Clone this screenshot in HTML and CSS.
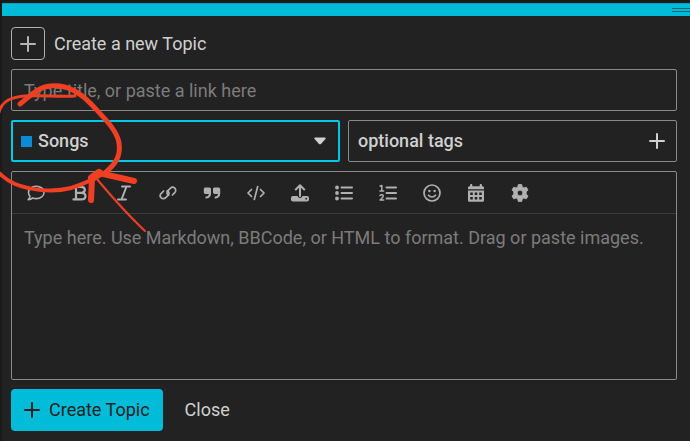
FILE: index.html
```html
<!DOCTYPE html>
<html lang="en">
<head>
  <meta charset="UTF-8" />
  <meta name="viewport" content="width=device-width, initial-scale=1.0"/>
  <title>Create a new Topic</title>
  <link rel="stylesheet" href="styles.css">
</head>
<body>
  <div class="page-strip"></div>
  <form class="composer">
    <div class="grippie"><span class="grip"></span></div>

    <div class="fields">
      <div class="action-title">
        <button type="button" class="action-btn" aria-label="Composer actions">
          <svg width="16" height="16" viewBox="0 0 16 16"><path d="M8 1v14M1 8h14" stroke="currentColor" stroke-width="2" stroke-linecap="round"/></svg>
        </button>
        <span>Create a new Topic</span>
      </div>

      <input type="text" class="title-input" aria-label="Title" placeholder="Type title, or paste a link here">

      <div class="selectors">
        <div class="category">
          <span class="swatch"></span>
          <select class="category-select" aria-label="Category">
            <option>Songs</option>
          </select>
          <svg class="caret" width="12" height="8" viewBox="0 0 12 8"><path d="M1.200.5h9.600c.9 0 1.200.8.6 1.400L7 6.900c-.6.6-1.400.6-2 0L.6 1.900C0 1.300.3.5 1.200.5z" fill="currentColor"/></svg>
        </div>
        <button type="button" class="tags">
          <span>optional tags</span>
          <svg width="16" height="16" viewBox="0 0 16 16"><path d="M8 1v14M1 8h14" stroke="currentColor" stroke-width="2" stroke-linecap="round"/></svg>
        </button>
      </div>

      <div class="editor">
        <div class="toolbar">
          <button type="button" aria-label="Quote post">
            <svg viewBox="0 0 18 18"><path d="M9.300 2.200c4.300 0 7.700 2.700 7.700 6.200s-3.400 6.200-7.700 6.200c-1.300 0-2.500-.2-3.500-.6-1.200.9-2.700 1.500-4.600 1.600 1-1 1.600-2.200 1.800-3.300C2 11.200 1.500 9.900 1.500 8.400c0-3.500 3.500-6.200 7.800-6.200z" fill="none" stroke="currentColor" stroke-width="1.600" stroke-linejoin="round"/></svg>
          </button>
          <button type="button" aria-label="Bold">
            <svg viewBox="0 0 18 18"><path d="M2.500 2.800h7.300c2.500 0 4 1.100 4 3 0 1.800-1.300 2.900-3.300 3 2.500.1 4 1.300 4 3.200 0 2.200-1.700 3.400-4.400 3.400H2.500M5 2.800v12.600M5 8.800h5.500" fill="none" stroke="currentColor" stroke-width="2.200" stroke-linecap="round"/></svg>
          </button>
          <button type="button" aria-label="Italic">
            <svg viewBox="0 0 18 18"><path d="M7 2.500h8M3 15.500h8M11.500 2.500l-5 13" fill="none" stroke="currentColor" stroke-width="2" stroke-linecap="round"/></svg>
          </button>
          <button type="button" aria-label="Link">
            <svg viewBox="0 0 18 18"><g fill="none" stroke="currentColor" stroke-width="1.700" stroke-linecap="round"><path d="M9.700 11.200C7.900 10.500 7.400 8.200 8.900 6.700l2.400-2.400c1.300-1.300 3.300-1.300 4.500-.1s1.200 3.200-.1 4.500l-2.300 2.300"/><path d="M8.300 6.800c1.800.7 2.300 3 .8 4.500l-2.400 2.400c-1.300 1.300-3.300 1.300-4.500.1s-1.200-3.200.1-4.500L4.600 7"/></g></svg>
          </button>
          <button type="button" aria-label="Blockquote">
            <svg viewBox="0 0 18 18"><g fill="currentColor"><path d="M2.500 3.500h3.700C7.300 3.500 8 4.200 8 5.300v4.200c0 3-1.700 4.900-4.600 4.900h-.9v-2h.9c1.500 0 2.300-.7 2.300-2.400H2.500C1.500 10 .8 9.300.8 8.300V5.200c0-1 .7-1.700 1.700-1.700z"/><path d="M11.700 3.500h3.700c1.100 0 1.800.7 1.800 1.800v4.200c0 3-1.700 4.900-4.600 4.900h-.9v-2h.9c1.500 0 2.300-.7 2.300-2.400h-3.200c-1 0-1.700-.7-1.700-1.700V5.200c0-1 .7-1.700 1.700-1.700z"/></g></svg>
          </button>
          <button type="button" aria-label="Preformatted text">
            <svg viewBox="0 0 18 18"><path d="M4.500 5.500L1 9l3.500 3.500M13.500 5.500L17 9l-3.500 3.500M10.700 2.500l-3.400 13" fill="none" stroke="currentColor" stroke-width="1.700" stroke-linecap="round" stroke-linejoin="round"/></svg>
          </button>
          <button type="button" aria-label="Upload">
            <svg viewBox="0 0 18 18"><path d="M9 12V1.500M4.800 5.500L9 1.300l4.200 4.200" fill="none" stroke="currentColor" stroke-width="2" stroke-linecap="round" stroke-linejoin="round"/><path d="M2 12h4.700c.2 1.200 1.100 2 2.300 2s2.100-.8 2.300-2H16c1.200 0 2 .8 2 2v1.500c0 1.200-.8 2-2 2H2c-1.200 0-2-.8-2-2V14c0-1.200.8-2 2-2zm13.200 1.800a.9.9 0 100 1.800.9.9 0 000-1.800z" fill="currentColor"/></svg>
          </button>
          <button type="button" aria-label="Bulleted list">
            <svg viewBox="0 0 18 18"><g fill="currentColor"><circle cx="2" cy="3.500" r="1.900"/><circle cx="2" cy="9" r="1.900"/><circle cx="2" cy="14.500" r="1.900"/></g><path d="M6.500 3.500H17M6.500 9H17M6.500 14.500H17" stroke="currentColor" stroke-width="2" stroke-linecap="round"/></svg>
          </button>
          <button type="button" aria-label="Numbered list">
            <svg viewBox="0 0 18 18"><path d="M7.500 3.500H17M7.500 9H17M7.500 14.500H17" stroke="currentColor" stroke-width="2" stroke-linecap="round"/><path d="M1.200 2l1.600-.6v5.400M1 7h3.700M1 11.500c.8-1.200 3.300-1 3.300.5 0 1.400-1.800 2.300-3.200 4h3.600" fill="none" stroke="currentColor" stroke-width="1.500" stroke-linecap="round" stroke-linejoin="round"/></svg>
          </button>
          <button type="button" aria-label="Emoji">
            <svg viewBox="0 0 18 18"><circle cx="9" cy="9" r="8" fill="none" stroke="currentColor" stroke-width="1.700"/><g fill="currentColor"><circle cx="6.400" cy="7" r="1.200"/><circle cx="11.600" cy="7" r="1.200"/></g><path d="M5.500 11.200c1.700 2.300 5.300 2.300 7 0" fill="none" stroke="currentColor" stroke-width="1.600" stroke-linecap="round"/></svg>
          </button>
          <button type="button" aria-label="Date and time">
            <svg viewBox="0 0 18 18"><path d="M4.200 1v3M13.800 1v3" stroke="currentColor" stroke-width="2.200" stroke-linecap="round"/><path fill="currentColor" fill-rule="evenodd" d="M2.500 2.200h13c.9 0 1.500.6 1.500 1.500v1.600H1V3.700c0-.9.6-1.500 1.500-1.500zM1 6.500h16v9.700c0 1-.7 1.600-1.600 1.600H2.600c-.9 0-1.600-.6-1.600-1.600zM3.200 8.500v2.400h2.600V8.500zM7.700 8.500v2.400h2.600V8.500zM12.200 8.500v2.400h2.600V8.500zM3.200 13v2.400h2.600V13zM7.700 13v2.400h2.600V13zM12.200 13v2.400h2.600V13z"/></svg>
          </button>
          <button type="button" aria-label="Options">
            <svg viewBox="0 0 18 18"><path fill="currentColor" fill-rule="evenodd" d="M7.300.5h3.400l.6 2.500 1.600.9 2.400-.8L17 6l-1.800 1.900v2.200L17 12l-1.700 2.900-2.400-.8-1.600.9-.6 2.500H7.300L6.700 15l-1.600-.9-2.400.8L1 12l1.800-1.900V7.900L1 6l1.700-2.900 2.400.8L6.700 3zM9 6.200a2.800 2.800 0 100 5.600 2.800 2.800 0 000-5.600z" stroke="currentColor" stroke-width=".8" stroke-linejoin="round"/></svg>
          </button>
        </div>
        <textarea class="editor-input" aria-label="Post" placeholder="Type here. Use Markdown, BBCode, or HTML to format. Drag or paste images."></textarea>
      </div>

      <div class="submit-panel">
        <button type="submit" class="create">
          <svg width="16" height="16" viewBox="0 0 16 16"><path d="M8 1v14M1 8h14" stroke="currentColor" stroke-width="2" stroke-linecap="round"/></svg>
          <span>Create Topic</span>
        </button>
        <button type="button" class="close">Close</button>
      </div>
    </div>
  </form>

  <!-- hand-drawn circle and arrow -->
  <svg class="marker" width="160" height="240" viewBox="0 0 160 240" fill="none" stroke="#f13f24" stroke-linecap="round" stroke-linejoin="round" aria-hidden="true">
    <path d="M20 104C30 96 38 87 50 86C66 84 80 92 92 105C104 118 117 130 119 143C121 157 115 164 106 172" stroke-width="5"/>
    <path d="M106 172C96 178 84 184 71 188C52 193 30 190 15 184C8 181 3 177 -2 172" stroke-width="4"/>
    <path d="M75 96C58 97 42 95 25 96C11 97 2 101 -1 112" stroke-width="3"/>
    <path d="M91 200L92 178L99 173L134 181" stroke-width="6"/>
    <path d="M92 178L99 173" stroke-width="8"/>
    <path d="M96 178C112 197 128 215 145 231" stroke-width="2"/>
  </svg>
</body>
</html>
```
FILE: styles.css
```css
* {
  box-sizing: border-box;
}

body {
  margin: 0;
  min-height: 100vh;
  padding-left: 2px;
  background: #1a1a1a;
  color: #d0d0d0;
  font-family: Roboto, "Liberation Sans", sans-serif;
  font-size: 18px;
  line-height: 24px;
  display: flex;
  flex-direction: column;
  overflow: hidden;
}

button,
input,
select,
textarea {
  margin: 0;
  padding: 0;
  border: none;
  background: none;
  color: inherit;
  font: inherit;
}

button {
  display: flex;
  align-items: center;
  cursor: pointer;
}

svg {
  display: block;
  flex: none;
}

.page-strip {
  height: 3px;
}

.composer {
  flex: 1;
  display: flex;
  flex-direction: column;
  background: #222;
}

.grippie {
  height: 13px;
  display: flex;
  align-items: center;
  justify-content: flex-end;
  background: #00bcd8;
  border-top: 1px solid #06a0b8;
}

.grip {
  width: 18px;
  height: 4px;
  border-top: 1px solid #0b6573;
  border-bottom: 1px solid #0b6573;
}

.fields {
  flex: 1;
  display: flex;
  flex-direction: column;
  gap: 9px;
  padding: 11px 13px 10px 9px;
}

.action-title {
  display: flex;
  align-items: center;
  gap: 9px;
}

.action-btn {
  width: 34px;
  height: 33px;
  justify-content: center;
  border: 1px solid #b0b0b0;
  border-radius: 4px;
  color: #b4b4b4;
}

.title-input {
  width: 100%;
  height: 42px;
  padding: 0 12px;
  border: 1px solid #8a8a8a;
  border-radius: 2px;
}

::placeholder {
  color: #7c7c7c;
  opacity: 1;
}

.selectors {
  display: grid;
  grid-template-columns: 1fr 1fr;
  gap: 8px;
  font-weight: 500;
}

.category,
.tags {
  height: 42px;
  display: flex;
  align-items: center;
  border: 1px solid #8a8a8a;
  border-radius: 2px;
}

.category {
  padding: 0 12px 0 8px;
  gap: 6px;
  border: 2px solid #00c8e6;
}

.swatch {
  width: 11px;
  height: 11px;
  background: #0b8ad6;
}

.category-select {
  flex: 1;
  appearance: none;
  outline: none;
}

.tags {
  justify-content: space-between;
  padding: 0 11px 0 9px;
  font-weight: 500;
}

.editor {
  flex: 1;
  min-height: 160px;
  display: flex;
  flex-direction: column;
  border: 1px solid #8a8a8a;
  border-radius: 2px;
}

.toolbar {
  display: flex;
  padding-left: 2px;
  border-bottom: 1px solid #3c3c3c;
  color: #b0b0b0;
}

.toolbar button {
  width: 44px;
  height: 41px;
  justify-content: center;
}

.toolbar svg {
  width: 18px;
  height: 18px;
}

.editor-input {
  flex: 1;
  width: 100%;
  padding: 12px;
  resize: none;
  outline: none;
}

.submit-panel {
  display: flex;
  gap: 22px;
}

.create {
  height: 42px;
  gap: 9px;
  padding: 0 13px;
  border-radius: 4px;
  background: #00bcd8;
  color: #222;
}

.marker {
  position: absolute;
  top: 0;
  left: 0;
  pointer-events: none;
}
```
